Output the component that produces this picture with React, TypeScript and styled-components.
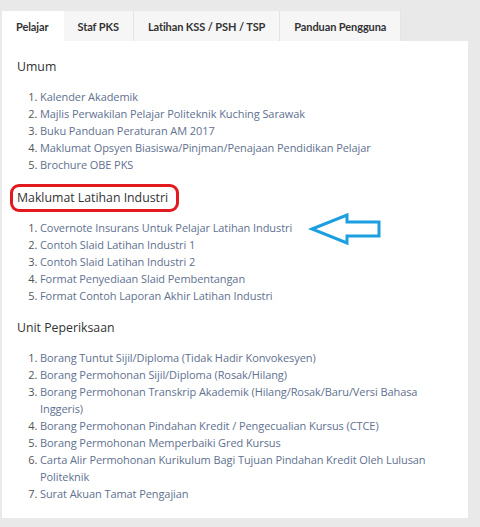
import React from "react";
import styled, { createGlobalStyle } from "styled-components";

const Global = createGlobalStyle`
  html, body { margin: 0; padding: 0; background: #e9e9e9; }
  body { font-family: "Open Sans", "Liberation Sans", sans-serif; }
`;

const Page = styled.div`
  padding: 11px 0 8px 2px;
  width: 466px;
`;

const TabBar = styled.div`
  display: flex;
  height: 30px;
`;

const Tab = styled.div<{ $active?: boolean }>`
  display: flex;
  align-items: center;
  padding: 0 14px;
  font-family: "Lato", "Open Sans", sans-serif;
  font-weight: 700;
  font-size: 11px;
  letter-spacing: -0.1px;
  color: #333;
  background: ${(p) => (p.$active ? "#ffffff" : "#f6f6f6")};
  border-right: 1px solid ${(p) => (p.$active ? "#ffffff" : "#e4e4e4")};
  box-sizing: border-box;
`;

const Panel = styled.div`
  position: relative;
  background: #fff;
  padding: 16px 15px 16px;
`;

const Heading = styled.h4<{ $marked?: boolean }>`
  position: relative;
  display: block;
  width: fit-content;
  margin: 0;
  font-family: "Open Sans", sans-serif;
  font-weight: 400;
  font-size: 12.3px;
  line-height: 20px;
  color: #333;
  ${(p) =>
    p.$marked &&
    `
    &::after {
      content: "";
      position: absolute;
      left: -7px;
      right: -11px;
      top: -4px;
      bottom: -4px;
      border: 3px solid #e2191f;
      border-radius: 9px;
    }
  `}
`;

const Section = styled.section`
  & + & { margin-top: 14.5px; }
`;

const List = styled.ol`
  margin: 11px 0 0;
  padding-left: 23px;
  font-family: "Open Sans", sans-serif;
  font-size: 11px;
  letter-spacing: -0.08px;
  line-height: 17px;
  color: #555;
`;

const Item = styled.li`
  a {
    color: #617190;
    text-decoration: none;
  }
`;

const Arrow = styled.svg`
  position: absolute;
  left: 306px;
  top: 172px;
`;

const sections = [
  {
    title: "Umum",
    items: [
      "Kalender Akademik",
      "Majlis Perwakilan Pelajar Politeknik Kuching Sarawak",
      "Buku Panduan Peraturan AM 2017",
      "Maklumat Opsyen Biasiswa/Pinjman/Penajaan Pendidikan Pelajar",
      "Brochure OBE PKS",
    ],
  },
  {
    title: "Maklumat Latihan Industri",
    marked: true,
    items: [
      "Covernote Insurans Untuk Pelajar Latihan Industri",
      "Contoh Slaid Latihan Industri 1",
      "Contoh Slaid Latihan Industri 2",
      "Format Penyediaan Slaid Pembentangan",
      "Format Contoh Laporan Akhir Latihan Industri",
    ],
  },
  {
    title: "Unit Peperiksaan",
    items: [
      "Borang Tuntut Sijil/Diploma (Tidak Hadir Konvokesyen)",
      "Borang Permohonan Sijil/Diploma (Rosak/Hilang)",
      "Borang Permohonan Transkrip Akademik (Hilang/Rosak/Baru/Versi Bahasa Inggeris)",
      "Borang Permohonan Pindahan Kredit / Pengecualian Kursus (CTCE)",
      "Borang Permohonan Memperbaiki Gred Kursus",
      "Carta Alir Permohonan Kurikulum Bagi Tujuan Pindahan Kredit Oleh Lulusan Politeknik",
      "Surat Akuan Tamat Pengajian",
    ],
  },
];

const tabs = ["Pelajar", "Staf PKS", "Latihan KSS / PSH / TSP", "Panduan Pengguna"];

export default function App() {
  return (
    <>
      <Global />
      <Page>
        <TabBar>
          {tabs.map((t, i) => (
            <Tab key={t} $active={i === 0}>
              {t}
            </Tab>
          ))}
        </TabBar>
        <Panel>
          {sections.map((s) => (
            <Section key={s.title}>
              <Heading $marked={s.marked}>{s.title}</Heading>
              <List>
                {s.items.map((it) => (
                  <Item key={it}>
                    <a href="#">{it}</a>
                  </Item>
                ))}
              </List>
            </Section>
          ))}
          <Arrow width="74" height="34" viewBox="0 0 74 34">
            <polygon
              points="4,16 39,2 39,9 71,9 71,23 39,23 39,30"
              fill="#fff"
              stroke="#1c9fe0"
              strokeWidth="3"
              strokeLinejoin="miter"
            />
          </Arrow>
        </Panel>
      </Page>
    </>
  );
}
